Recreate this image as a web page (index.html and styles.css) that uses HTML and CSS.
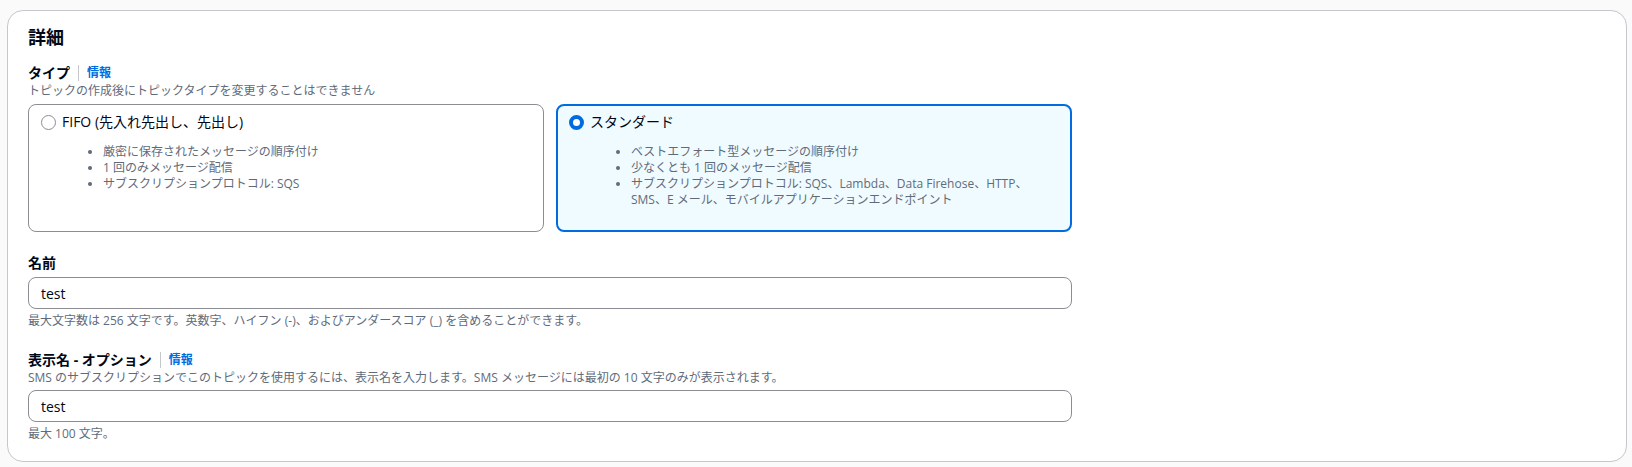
FILE: index.html
```html
<!DOCTYPE html>
<html lang="ja">
  <head>
    <meta charset="UTF-8" />
    <meta name="viewport" content="width=device-width, initial-scale=1.0" />
    <title>トピックの作成</title>

    <link rel="stylesheet" href="styles.css">
  </head>
  <body>
    <div class="container">
      <h2 class="container-title">詳細</h2>

      <div class="field">
        <div class="field-label">
          <span>タイプ</span>
          <a class="info-link" href="#">情報</a>
        </div>
        <p class="field-desc">トピックの作成後にトピックタイプを変更することはできません</p>

        <div class="tiles">
          <label class="tile">
            <div class="tile-head">
              <span class="radio"></span>
              <span class="tile-title">FIFO (先入れ先出し、先出し)</span>
            </div>
            <ul class="tile-list">
              <li>厳密に保存されたメッセージの順序付け</li>
              <li>1 回のみメッセージ配信</li>
              <li>サブスクリプションプロトコル: SQS</li>
            </ul>
          </label>

          <label class="tile selected">
            <div class="tile-head">
              <span class="radio checked"></span>
              <span class="tile-title">スタンダード</span>
            </div>
            <ul class="tile-list">
              <li>ベストエフォート型メッセージの順序付け</li>
              <li>少なくとも 1 回のメッセージ配信</li>
              <li>サブスクリプションプロトコル: SQS、Lambda、Data Firehose、HTTP、<br>SMS、E メール、モバイルアプリケーションエンドポイント</li>
            </ul>
          </label>
        </div>
      </div>

      <div class="field">
        <div class="field-label">
          <span>名前</span>
        </div>
        <input class="text-input" type="text" value="test" />
        <p class="field-hint">最大文字数は 256 文字です。英数字、ハイフン (-)、およびアンダースコア (_) を含めることができます。</p>
      </div>

      <div class="field">
        <div class="field-label">
          <span>表示名 - <i>オプション</i></span>
          <a class="info-link" href="#">情報</a>
        </div>
        <p class="field-desc">SMS のサブスクリプションでこのトピックを使用するには、表示名を入力します。SMS メッセージには最初の 10 文字のみが表示されます。</p>
        <input class="text-input" type="text" value="test" />
        <p class="field-hint">最大 100 文字。</p>
      </div>
    </div>
  </body>
</html>
```

FILE: styles.css
```css
* {
  margin: 0;
  padding: 0;
  box-sizing: border-box;
}

body {
  background-color: #fafafa;
  color: #000716;
  font-family: "Open Sans", "Noto Sans CJK JP", sans-serif;
  font-size: 14px;
  line-height: 20px;
  padding: 10px 5px 6px 7px;
}

.container {
  background-color: #ffffff;
  border: 1px solid #c6c6cd;
  border-radius: 16px;
  padding: 15px 20px 25px 20px;
  height: 452px;
}

.container-title {
  font-size: 18px;
  line-height: 22px;
  font-weight: 700;
  margin-bottom: 15px;
}

.field {
  max-width: 1044px;
}

.field + .field {
  margin-top: 21px;
}

.field-label {
  display: flex;
  align-items: center;
  font-weight: 700;
}

.field-label i {
  font-style: normal;
}

.info-link {
  color: #006ce0;
  font-size: 12px;
  font-weight: 700;
  text-decoration: none;
  border-left: 1px solid #c6c6cd;
  margin-left: 8px;
  padding-left: 8px;
  line-height: 16px;
}

.field-desc,
.field-hint {
  color: #5f6b7a;
  font-size: 12px;
  line-height: 16px;
}

.field-hint {
  margin-top: 4px;
}

.tiles {
  display: grid;
  grid-template-columns: 1fr 1fr;
  gap: 12px;
  margin-top: 5px;
}

.tile {
  display: block;
  border: 1px solid #8c8c94;
  border-radius: 8px;
  padding: 7px 12px 23px 12px;
  cursor: pointer;
}

.tile.selected {
  border: 2px solid #006ce0;
  background-color: #f0fbff;
  padding: 6px 11px 22px 11px;
}

.tile-head {
  display: flex;
  align-items: center;
  gap: 6px;
}

.tile-title {
  font-weight: 400;
}

.radio {
  width: 15px;
  height: 15px;
  border: 1.5px solid #8c8c94;
  border-radius: 50%;
  background-color: #ffffff;
  flex-shrink: 0;
}

.radio.checked {
  border: 4.5px solid #006ce0;
}

.tile-list {
  color: #5f6b7a;
  font-size: 12px;
  line-height: 16px;
  margin-top: 12px;
  padding-left: 62px;
}

.text-input {
  display: block;
  width: 100%;
  height: 32px;
  margin-top: 4px;
  border: 1px solid #8c8c94;
  border-radius: 8px;
  padding: 0 12px;
  font-family: inherit;
  font-size: 14px;
  color: #000716;
  background-color: #ffffff;
}
```
